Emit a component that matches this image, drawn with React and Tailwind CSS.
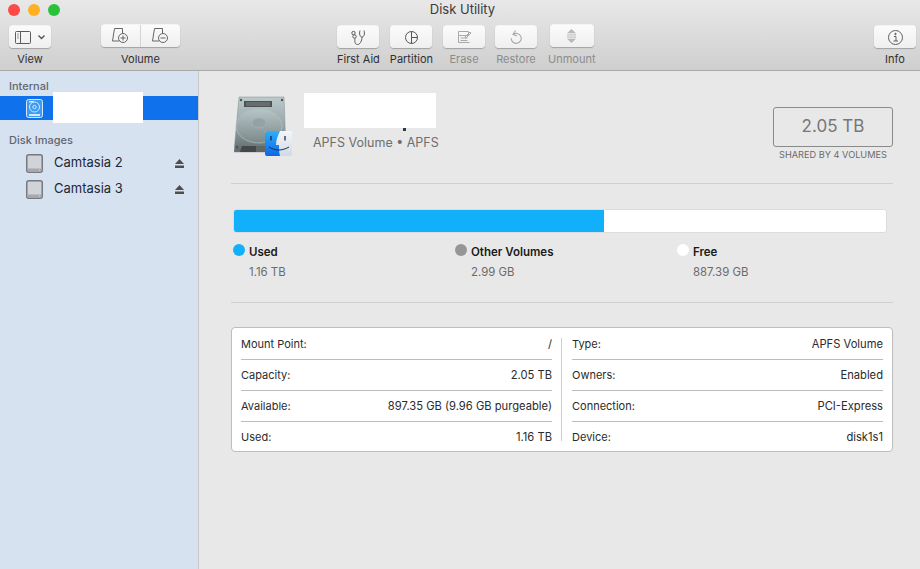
import React from 'react';

const font = { fontFamily: 'Inter' };

function ToolButton({ width = 'w-[42px]', dim, raised, label, children }) {
  return (
    <div className="flex flex-col items-center">
      <div className={`${width} h-[23px] rounded-[4px] border-t border-t-[#f4f4f4] bg-gradient-to-b from-[#fbfbfb] to-[#efefef] shadow-[0_1px_1px_rgba(0,0,0,0.25)] flex items-center justify-center`}>
        {children}
      </div>
      <span className={`${raised ? 'mt-[5px]' : 'mt-[4px]'} text-[11px] leading-[14px] whitespace-nowrap ${dim ? 'text-[#8c8c8c]' : 'text-[#2f2f2f]'}`}>{label}</span>
    </div>
  );
}

function SidebarIcon() {
  return (
    <svg width="16" height="13" viewBox="0 0 16 13" fill="none" stroke="#5c5c5c">
      <rect x="0.5" y="0.5" width="15" height="12" rx="1" />
      <path d="M5.5 1v11" />
      <path d="M2 3h2M2 5h2M2 7h2" stroke="#999" />
    </svg>
  );
}

function VolumeIcon({ minus }) {
  return (
    <svg width="19" height="16" viewBox="0 0 19 16" fill="none" stroke="#666" strokeWidth="1">
      <path d="M3.5 0.5h8v5M3.5 0.5l-2 12.5h7" />
      <circle cx="12" cy="10" r="4.5" fill="#f5f5f5" />
      {minus ? <path d="M9.5 10h5" /> : <path d="M9.5 10h5M12 7.5v5" />}
    </svg>
  );
}

function Eject() {
  return (
    <svg width="9" height="9" viewBox="0 0 9 9" fill="#4e4e4e">
      <path d="M4.5 0L9 5H0z" />
      <rect x="0" y="6.5" width="9" height="2.5" />
    </svg>
  );
}

function DiskGlyph() {
  return (
    <svg width="17" height="19" viewBox="0 0 17 19">
      <rect x="0.75" y="0.75" width="15.5" height="17.5" rx="2" fill="#d0d3d8" stroke="#757a80" strokeWidth="1.5" />
      <rect x="1.5" y="14.5" width="14" height="3" rx="1" fill="#a5a8ad" />
      <circle cx="13.5" cy="16" r="0.6" fill="#e4e4e4" />
    </svg>
  );
}

function SelectedDisk() {
  return (
    <svg width="17" height="19" viewBox="0 0 17 19">
      <rect x="0.5" y="0.5" width="16" height="18" rx="2" fill="#3d9bf3" stroke="#d5e8fb" />
      <circle cx="8.5" cy="8" r="5" fill="none" stroke="#d5e8fb" />
      <circle cx="8.5" cy="8" r="1.7" fill="none" stroke="#d5e8fb" />
      <rect x="3" y="2" width="5" height="1.5" fill="#d5e8fb" />
      <rect x="3" y="15" width="11" height="2" fill="#d5e8fb" />
    </svg>
  );
}

function HddIcon() {
  return (
    <svg width="60" height="61" viewBox="0 0 60 61">
      <defs>
        <linearGradient id="hdd" x1="0" y1="0" x2="0" y2="1">
          <stop offset="0" stopColor="#bccacc" />
          <stop offset="0.55" stopColor="#93a3a6" />
          <stop offset="1" stopColor="#5f686a" />
        </linearGradient>
        <linearGradient id="platter" x1="0" y1="0" x2="0" y2="1">
          <stop offset="0" stopColor="#b8c5c7" />
          <stop offset="1" stopColor="#7b898b" />
        </linearGradient>
        <linearGradient id="finderBlue" x1="0" y1="0" x2="0" y2="1">
          <stop offset="0" stopColor="#2bb0fa" />
          <stop offset="1" stopColor="#0f66e6" />
        </linearGradient>
        <linearGradient id="finderWhite" x1="0" y1="0" x2="0" y2="1">
          <stop offset="0" stopColor="#f4f6f8" />
          <stop offset="1" stopColor="#cfdae6" />
        </linearGradient>
      </defs>
      <path d="M5 1h45l2 55H0z" fill="url(#hdd)" stroke="#808a8c" strokeWidth="0.5" />
      <rect x="10" y="5" width="28" height="6" fill="#4d5253" />
      <path d="M12 7h24M12 9h24" stroke="#8f9494" strokeWidth="0.8" />
      <ellipse cx="25" cy="30" rx="23" ry="17" fill="url(#platter)" stroke="#b2c0c1" strokeWidth="0.7" />
      <ellipse cx="25" cy="27" rx="7" ry="5" fill="#93a2a4" stroke="#aebabc" strokeWidth="0.5" />
      <path d="M8 50h24v6H6z" fill="#43484a" />
      <path d="M23 50v6M25 50v6M27 50v6M29 50v6M31 50v6" stroke="#8f9596" strokeWidth="0.8" />
      <g fill="#4f5556">
        <circle cx="7" cy="4" r="1.2" />
        <circle cx="48" cy="4" r="1.2" />
        <circle cx="3" cy="51" r="1.2" />
      </g>
      <rect x="31" y="35" width="27" height="25" rx="2" fill="url(#finderWhite)" />
      <path d="M33 35h13c-2 4-4 9-4 14h3c0 4 0 7 1 11H33a2 2 0 0 1-2-2V37a2 2 0 0 1 2-2z" fill="url(#finderBlue)" />
      <path d="M37 40v4.500M51 40v4.500" stroke="#1d2d44" strokeWidth="1.300" />
      <path d="M35 51c6 4 13 4 20 0" fill="none" stroke="#1d2d44" strokeWidth="1" />
    </svg>
  );
}

function InfoRow({ label, value, last }) {
  return (
    <div className={`h-[31px] flex items-center justify-between text-[11px] text-[#2b2b2b] ${last ? '' : 'border-b border-[#bcbcbc]'}`}>
      <span>{label}</span>
      <span className="text-[11.2px]">{value}</span>
    </div>
  );
}

function Legend({ color, label, value, width }) {
  return (
    <div className={width}>
      <div className="flex items-center gap-[4px] h-[14px]">
        <span className={`w-[12px] h-[12px] rounded-full ${color}`} />
        <span className="pt-[6px] text-[11.5px] font-semibold text-[#1a1a1a]">{label}</span>
      </div>
      <div className="mt-[8px] pl-[16px] text-[11.4px] leading-[14px] text-[#6b6b6b]">{value}</div>
    </div>
  );
}

export default function App() {
  return (
    <div style={font} className="w-[920px] h-[569px] overflow-hidden flex flex-col bg-[#e8e8e8]">
      {/* toolbar */}
      <div className="h-[71px] shrink-0 border-b border-[#a9a9a9] bg-gradient-to-b from-[#e8e8e8] to-[#cfcfcf]">
        <div className="h-[16px] grid grid-cols-[1fr_auto_1fr] items-center pl-[8px] pr-[3px]">
          <div className="flex gap-[8px]">
            <span className="w-[12px] h-[12px] rounded-full bg-[#fc4b47]" />
            <span className="w-[12px] h-[12px] rounded-full bg-[#fdb024]" />
            <span className="w-[12px] h-[12px] rounded-full bg-[#2ac23a]" />
          </div>
          <span className="text-[13px] text-[#3a3a3a]">Disk Utility</span>
          <div />
        </div>
        <div className="flex items-start pl-[9px] pt-[9px]">
          <ToolButton label="View">
            <SidebarIcon />
            <svg className="ml-[7px]" width="7" height="5" viewBox="0 0 7 5" fill="none" stroke="#555" strokeWidth="1.4">
              <path d="M0.5 0.5l3 3 3-3" />
            </svg>
          </ToolButton>
          <div className="ml-[50px] -mt-px">
            <ToolButton width="w-[79px]" raised label="Volume">
              <div className="flex-1 h-full flex items-center justify-center border-r border-[#d4d4d4]"><VolumeIcon /></div>
              <div className="flex-1 h-full flex items-center justify-center"><VolumeIcon minus /></div>
            </ToolButton>
          </div>
          <div className="ml-[157px]">
            <ToolButton label="First Aid">
              <svg width="15" height="15" viewBox="0 0 15 15" fill="none" stroke="#5a5a5a">
                <circle cx="2.500" cy="3" r="1.700" />
                <circle cx="3.500" cy="6.500" r="1.700" />
                <path d="M9 0.500C8 4 9 7 11 7s3-3 2-6.500" />
                <path d="M11 7c0 4-2 7.500-4.500 7.500S3.500 11.500 4 8.200" />
              </svg>
            </ToolButton>
          </div>
          <div className="ml-[10px]">
            <ToolButton label="Partition">
              <svg width="13" height="13" viewBox="0 0 13 13" fill="none" stroke="#555">
                <circle cx="6.500" cy="6.500" r="6" />
                <path d="M6.500 0.500v12M6.500 6.500h6" />
              </svg>
            </ToolButton>
          </div>
          <div className="ml-[10px]">
            <ToolButton dim label="Erase">
              <svg width="15" height="14" viewBox="0 0 15 14" fill="none" stroke="#a8a8a8">
                <path d="M1.500 1.500h10v4h-10zM1.500 5.500v7h11M3.500 8h7M3.500 10.500h7" />
                <path d="M8 7l5-5 1 1-5 5z" />
              </svg>
            </ToolButton>
          </div>
          <div className="ml-[10px]">
            <ToolButton dim label="Restore">
              <svg width="12" height="15" viewBox="0 0 12 15" fill="none" stroke="#a8a8a8" strokeWidth="1.100">
                <path d="M3 4.500a5 5 0 1 1-1.800 3.800" />
                <path d="M5.500 0.500L3 4.500l4 1.500" />
              </svg>
            </ToolButton>
          </div>
          <div className="ml-[11px] -mt-px">
            <ToolButton width="w-[44px]" dim raised label="Unmount">
              <svg width="9" height="14" viewBox="0 0 9 14" fill="#b8b8b8">
                <path d="M4.500 0L9 4.200H0zM4.500 14L0 9.800h9z" />
                <rect x="0" y="5.400" width="9" height="1" />
                <rect x="0" y="7.600" width="9" height="1" />
              </svg>
            </ToolButton>
          </div>
          <div className="ml-auto mr-[4px]">
            <ToolButton label="Info">
              <svg width="15" height="15" viewBox="0 0 15 15" fill="none" stroke="#5e5e5e">
                <circle cx="7.500" cy="7.500" r="7" />
                <path d="M6 6.500h2v4.500M5.500 11h4.500" />
                <circle cx="7.500" cy="4" r="0.700" fill="#5e5e5e" />
              </svg>
            </ToolButton>
          </div>
        </div>
      </div>

      <div className="flex-1 flex min-h-0">
        {/* sidebar */}
        <div className="w-[199px] shrink-0 bg-[#d7e2f0] border-r border-[#c8c8c8]">
          <div className="pt-[8px] pl-[9px] h-[25px] text-[11px] leading-[14px] font-medium text-[#5f6670]">Internal</div>
          <div className="relative h-[24px] bg-[#1071ec] flex items-center pl-[26px]">
            <SelectedDisk />
            <div className="absolute left-[53px] -top-[4px] w-[90px] h-[31px] bg-white" />
          </div>
          <div className="pt-[13px] pl-[9px] h-[30px] text-[11px] leading-[14px] font-medium text-[#5f6670]">Disk Images</div>
          {['Camtasia 2', 'Camtasia 3'].map((name) => (
            <div key={name} className="h-[26px] flex items-center pl-[26px] pr-[14px]">
              <DiskGlyph />
              <span className="ml-[11px] text-[13px] text-[#1f2733]">{name}</span>
              <span className="ml-auto flex"><Eject /></span>
            </div>
          ))}
        </div>

        {/* main */}
        <div className="flex-1 px-[32px]">
          <div className="relative h-[113px] border-b border-[#cfcfcf] flex">
            <div className="pl-[3px] pt-[25px]"><HddIcon /></div>
            <div className="ml-[19px] pt-[63px] text-[12.500px] leading-[17px] text-[#6e6e6e] whitespace-nowrap">APFS Volume • APFS</div>
            <div className="absolute left-[73px] top-[22px] w-[132px] h-[35px] bg-white" />
            <div className="absolute left-[172px] top-[57px] w-[3px] h-[3px] bg-[#2a3a4a]" />
            <div className="ml-auto pt-[36px] flex flex-col items-center">
              <div className="w-[120px] h-[40px] rounded-[3px] border border-[#8a8a8a] flex items-center justify-center text-[17px] text-[#777]">2.05 TB</div>
              <div className="mt-[2px] text-[9.200px] leading-[12px] text-[#6b6b6b] whitespace-nowrap">SHARED BY 4 VOLUMES</div>
            </div>
          </div>

          <div className="h-[119px] border-b border-[#cfcfcf] px-[2px] pt-[25px]">
            <div className="h-[24px] w-[654px] rounded-[3px] bg-white flex overflow-hidden border border-[#dcdcdc]">
              <div className="w-[370px] bg-[#12b0fb]" />
            </div>
            <div className="flex mt-[10px]">
              <Legend width="w-[222px]" color="bg-[#12b0fb]" label="Used" value="1.16 TB" />
              <Legend width="w-[222px]" color="bg-[#969696]" label="Other Volumes" value="2.99 GB" />
              <Legend width="w-[200px]" color="bg-white" label="Free" value="887.39 GB" />
            </div>
          </div>

          <div className="mt-[24px] h-[125px] rounded-[4px] border border-[#bdbdbd] bg-white flex px-[9px] py-[1px]">
            <div className="w-[311px]">
              <InfoRow label="Mount Point:" value="/" />
              <InfoRow label="Capacity:" value="2.05 TB" />
              <InfoRow label="Available:" value="897.35 GB (9.96 GB purgeable)" />
              <InfoRow label="Used:" value="1.16 TB" last />
            </div>
            <div className="w-[1px] mx-[9px] my-[9px] bg-[#cfcfcf]" />
            <div className="w-[311px] ml-[1px]">
              <InfoRow label="Type:" value="APFS Volume" />
              <InfoRow label="Owners:" value="Enabled" />
              <InfoRow label="Connection:" value="PCI-Express" />
              <InfoRow label="Device:" value="disk1s1" last />
            </div>
          </div>
        </div>
      </div>
    </div>
  );
}
